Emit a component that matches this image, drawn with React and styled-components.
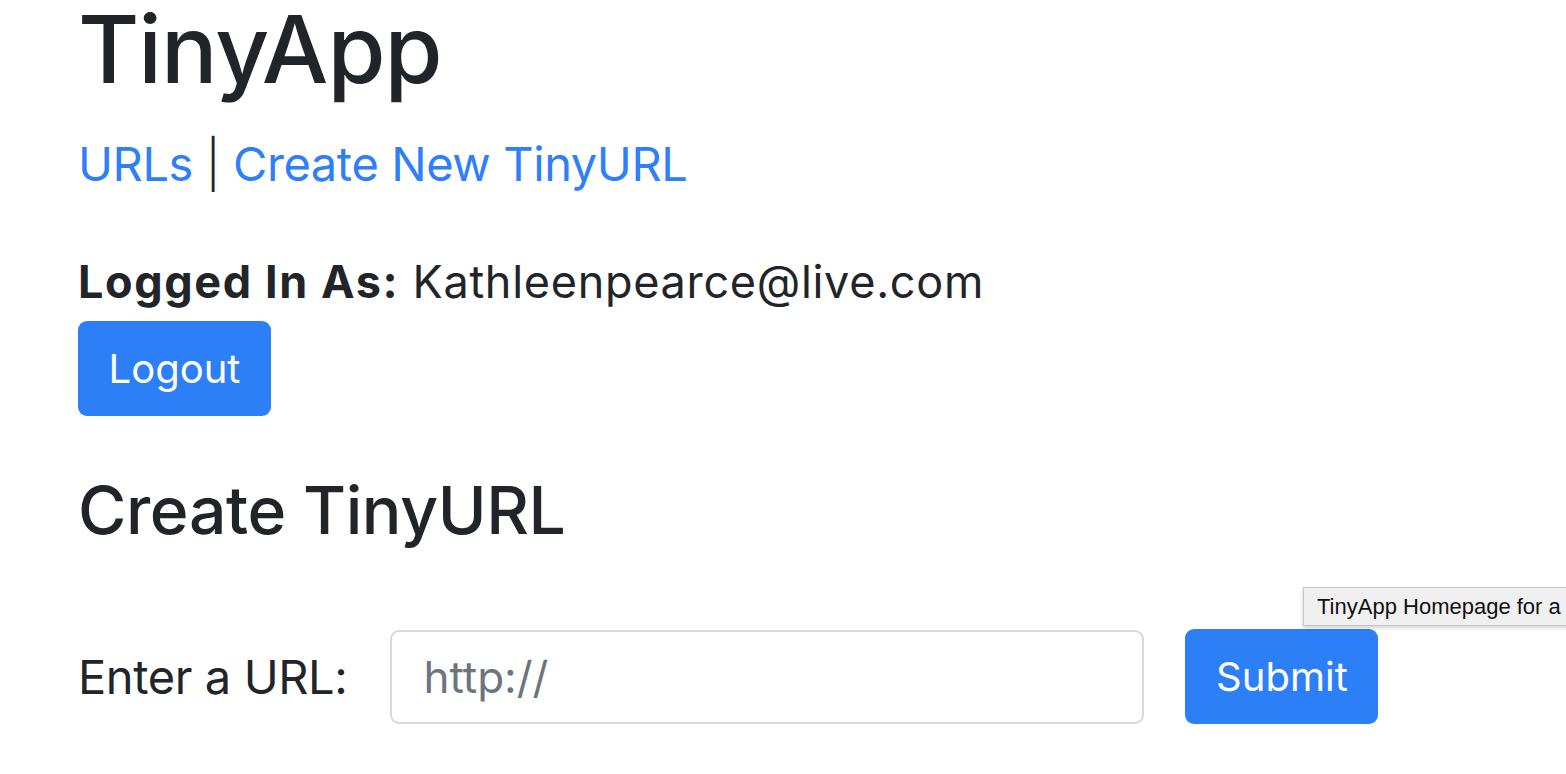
import styled, { createGlobalStyle } from "styled-components";

const GlobalStyle = createGlobalStyle`
  html, body {
    margin: 0;
    padding: 0;
    background: #fff;
    overflow: hidden;
  }
  body {
    font-family: Inter, "Noto Sans", "Liberation Sans", sans-serif;
    color: #212529;
  }
  #root {
    position: relative;
    min-height: 774px;
  }
`;

const Page = styled.div`
  padding: 0 0 0 78px;
  display: flex;
  flex-direction: column;
  align-items: flex-start;
`;

const Title = styled.h1`
  margin: 0;
  padding-bottom: 8px;
  font-size: 94px;
  font-weight: 500;
  line-height: 1.05;
  letter-spacing: -1px;
`;

const Nav = styled.nav`
  margin-top: 29px;
  font-size: 47px;
  line-height: 1.2;
  letter-spacing: -0.4px;
`;

const NavLink = styled.a`
  color: #2f80f7;
  text-decoration: none;
`;

const Sep = styled.span`
  color: #212529;
  font-weight: 300;
`;

const LoginLine = styled.div`
  margin-top: 63px;
  font-size: 45px;
  line-height: 1.2;
  letter-spacing: 0.7px;
`;

const Strong = styled.b`
  font-weight: 700;
  letter-spacing: 1.6px;
`;

const Button = styled.button`
  display: inline-flex;
  align-items: center;
  justify-content: center;
  height: 95px;
  width: 193px;
  padding: 0;
  border: none;
  border-radius: 9px;
  background: #2d7ff7;
  color: #fff;
  font-family: inherit;
  font-size: 40px;
  margin-top: ${(p) => p.$top || 0}px;
  flex-shrink: 0;
`;

const SubTitle = styled.h3`
  margin: 55px 0 0;
  font-size: 66px;
  font-weight: 500;
  line-height: 1.2;
  letter-spacing: -0.4px;
`;

const Form = styled.form`
  margin-top: 79px;
  display: flex;
  align-items: center;
  gap: 41px;
`;

const Label = styled.label`
  font-size: 47px;
  line-height: 1.2;
  letter-spacing: -0.4px;
  margin-right: 2px;
`;

const Input = styled.input`
  box-sizing: border-box;
  width: 754px;
  height: 94px;
  border: 2px solid #d6d9dd;
  border-radius: 9px;
  padding: 0 31px;
  font-family: inherit;
  font-size: 44px;
  color: #495057;
  &::placeholder {
    color: #6c757d;
  }
`;

const Tooltip = styled.div`
  position: absolute;
  left: 1303px;
  top: 587px;
  height: 39px;
  box-sizing: border-box;
  padding: 0 13px;
  display: flex;
  align-items: center;
  white-space: nowrap;
  background: #f0f0f0;
  border: 1px solid #c4c4c4;
  box-shadow: 0 2px 4px rgba(0, 0, 0, 0.18);
  font-family: "Liberation Sans", Arial, sans-serif;
  font-size: 22px;
  color: #111;
`;

export default function App() {
  return (
    <>
      <GlobalStyle />
      <Page>
        <Title>TinyApp</Title>
        <Nav>
          <NavLink href="#">URLs</NavLink> <Sep>|</Sep>{" "}
          <NavLink href="#">Create New TinyURL</NavLink>
        </Nav>
        <LoginLine>
          <Strong>Logged In As:</Strong> Kathleenpearce@live.com
        </LoginLine>
        <Button $top={12}>Logout</Button>
        <SubTitle>Create TinyURL</SubTitle>
        <Form onSubmit={(e) => e.preventDefault()}>
          <Label>Enter a URL:</Label>
          <Input type="text" placeholder="http://" />
          <Button type="submit">Submit</Button>
        </Form>
      </Page>
      <Tooltip>TinyApp Homepage for a</Tooltip>
    </>
  );
}
